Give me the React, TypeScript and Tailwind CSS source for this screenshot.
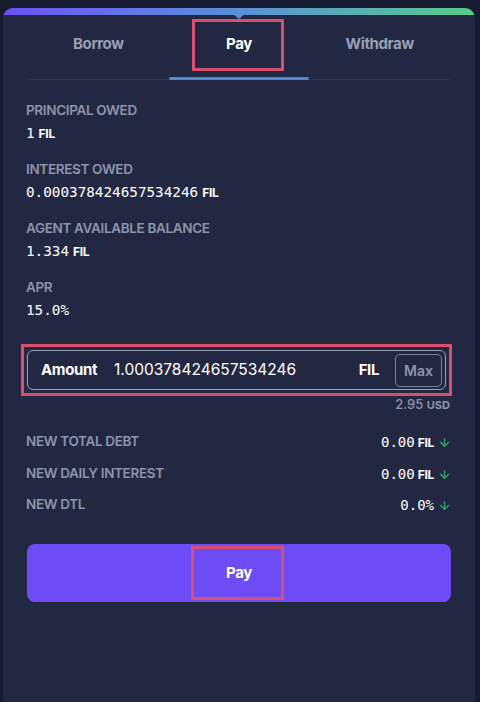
import { ArrowDown } from 'lucide-react'

const STATS = [
  { label: 'Principal owed', value: '1', unit: 'FIL' },
  { label: 'Interest owed', value: '0.000378424657534246', unit: 'FIL' },
  { label: 'Agent available balance', value: '1.334', unit: 'FIL' },
  { label: 'APR', value: '15.0%', unit: '' },
]

const CHANGES = [
  { label: 'New total debt', value: '0.00', unit: 'FIL' },
  { label: 'New daily interest', value: '0.00', unit: 'FIL' },
  { label: 'New DTL', value: '0.0%', unit: '' },
]

const sans = 'font-["Inter","Liberation_Sans",sans-serif]'
const mono = 'font-["DejaVu_Sans_Mono","Liberation_Mono",monospace]'

export default function App() {
  return (
    <div className={`h-[702px] overflow-hidden bg-[#161b31] pt-2 pl-[3px] pr-[5px] ${sans}`}>
      <div className="relative h-[720px] rounded-t-[10px] bg-[#222842] overflow-hidden">
        {/* gradient top strip */}
        <div className="h-[7px] bg-gradient-to-r from-[#6b4ff5] via-[#5a8fd6] to-[#5acb86]" />
        <div className="absolute left-[229px] top-[5px] w-0 h-0 border-l-[7px] border-r-[7px] border-t-[6px] border-l-transparent border-r-transparent border-t-[#5b8fd6]" />

        {/* tabs */}
        <div className="mx-[25px] flex border-b border-[#2d3450]">
          <button className="flex-1 h-[64px] pb-[5px] text-[15px] font-bold text-[#9a9fb3] tracking-tight">Borrow</button>
          <button className="relative flex-1 h-[64px] pb-[5px] text-[15px] font-bold text-white tracking-tight">
            <span className="absolute left-[23px] top-[4px] w-[92px] h-[52px] border-[3px] border-[#d9506e]" />
            Pay
            <span className="absolute left-0 right-0 -bottom-px h-[3px] rounded-full bg-[#4d8ad0]" />
          </button>
          <button className="flex-1 h-[64px] pb-[5px] text-[15px] font-bold text-[#9a9fb3] tracking-tight">Withdraw</button>
        </div>

        {/* stats */}
        <div className="px-[23px] pt-[22px] flex flex-col gap-[19px]">
          {STATS.map((s) => (
            <div key={s.label} className="flex flex-col gap-[6px]">
              <span className="h-[16px] text-[13.5px] leading-[16px] font-semibold uppercase tracking-tight text-[#8e94aa]">{s.label}</span>
              <span className="flex items-baseline gap-[4px] h-[18px] leading-[18px] text-white">
                <span className={`${mono} text-[14.3px]`}>{s.value}</span>
                {s.unit && <span className="text-[12px] font-bold tracking-tight">{s.unit}</span>}
              </span>
            </div>
          ))}
        </div>

        {/* amount input */}
        <div className="mt-[25px] ml-[18px] mr-[23px] border-[3px] border-[#d9506e] p-[3px]">
          <div className="flex items-center h-[40px] rounded-[6px] border border-[#9aa0b4] pl-[13px] pr-[3px]">
            <span className="text-[15px] font-bold text-white tracking-tight w-[73px]">Amount</span>
            <span className="flex-1 text-[15.5px] text-white">1.000378424657534246</span>
            <span className="text-[15px] font-bold text-white tracking-tight mr-[16px]">FIL</span>
            <button className="w-[47px] h-[33px] rounded-[5px] border border-[#7d839b] text-[14px] font-semibold text-[#8e94aa]">Max</button>
          </div>
        </div>
        <div className="mr-[25px] text-right text-[13px] leading-[16px] text-[#8e94aa] font-medium">
          2.95 <span className="text-[11px] font-bold">USD</span>
        </div>

        {/* projected */}
        <div className="mt-[21px] px-[23px] flex flex-col gap-[11.5px]">
          {CHANGES.map((c) => (
            <div key={c.label} className="flex items-start justify-between h-[20px]">
              <span className="text-[13.5px] leading-[14px] font-semibold uppercase tracking-tight text-[#8e94aa]">{c.label}</span>
              <span className="flex items-baseline gap-[3px] mr-[1px] text-white leading-[16px]">
                <span className={`${mono} text-[14px]`}>{c.value}</span>
                {c.unit && <span className="text-[12px] font-bold tracking-tight">{c.unit}</span>}
                <ArrowDown className="w-[13px] h-[13px] text-[#3a9e6a] self-center ml-[1px]" strokeWidth={2.5} />
              </span>
            </div>
          ))}
        </div>

        {/* pay button */}
        <div className="mt-[27px] mx-[24px]">
          <button className="relative w-full h-[58px] rounded-[8px] bg-[#6d4cf6] text-[15px] font-bold text-white tracking-tight">
            <span className="absolute left-[164px] top-[2px] w-[93px] h-[54px] border-[3px] border-[#d9506e]" />
            Pay
          </button>
        </div>
      </div>
    </div>
  )
}
